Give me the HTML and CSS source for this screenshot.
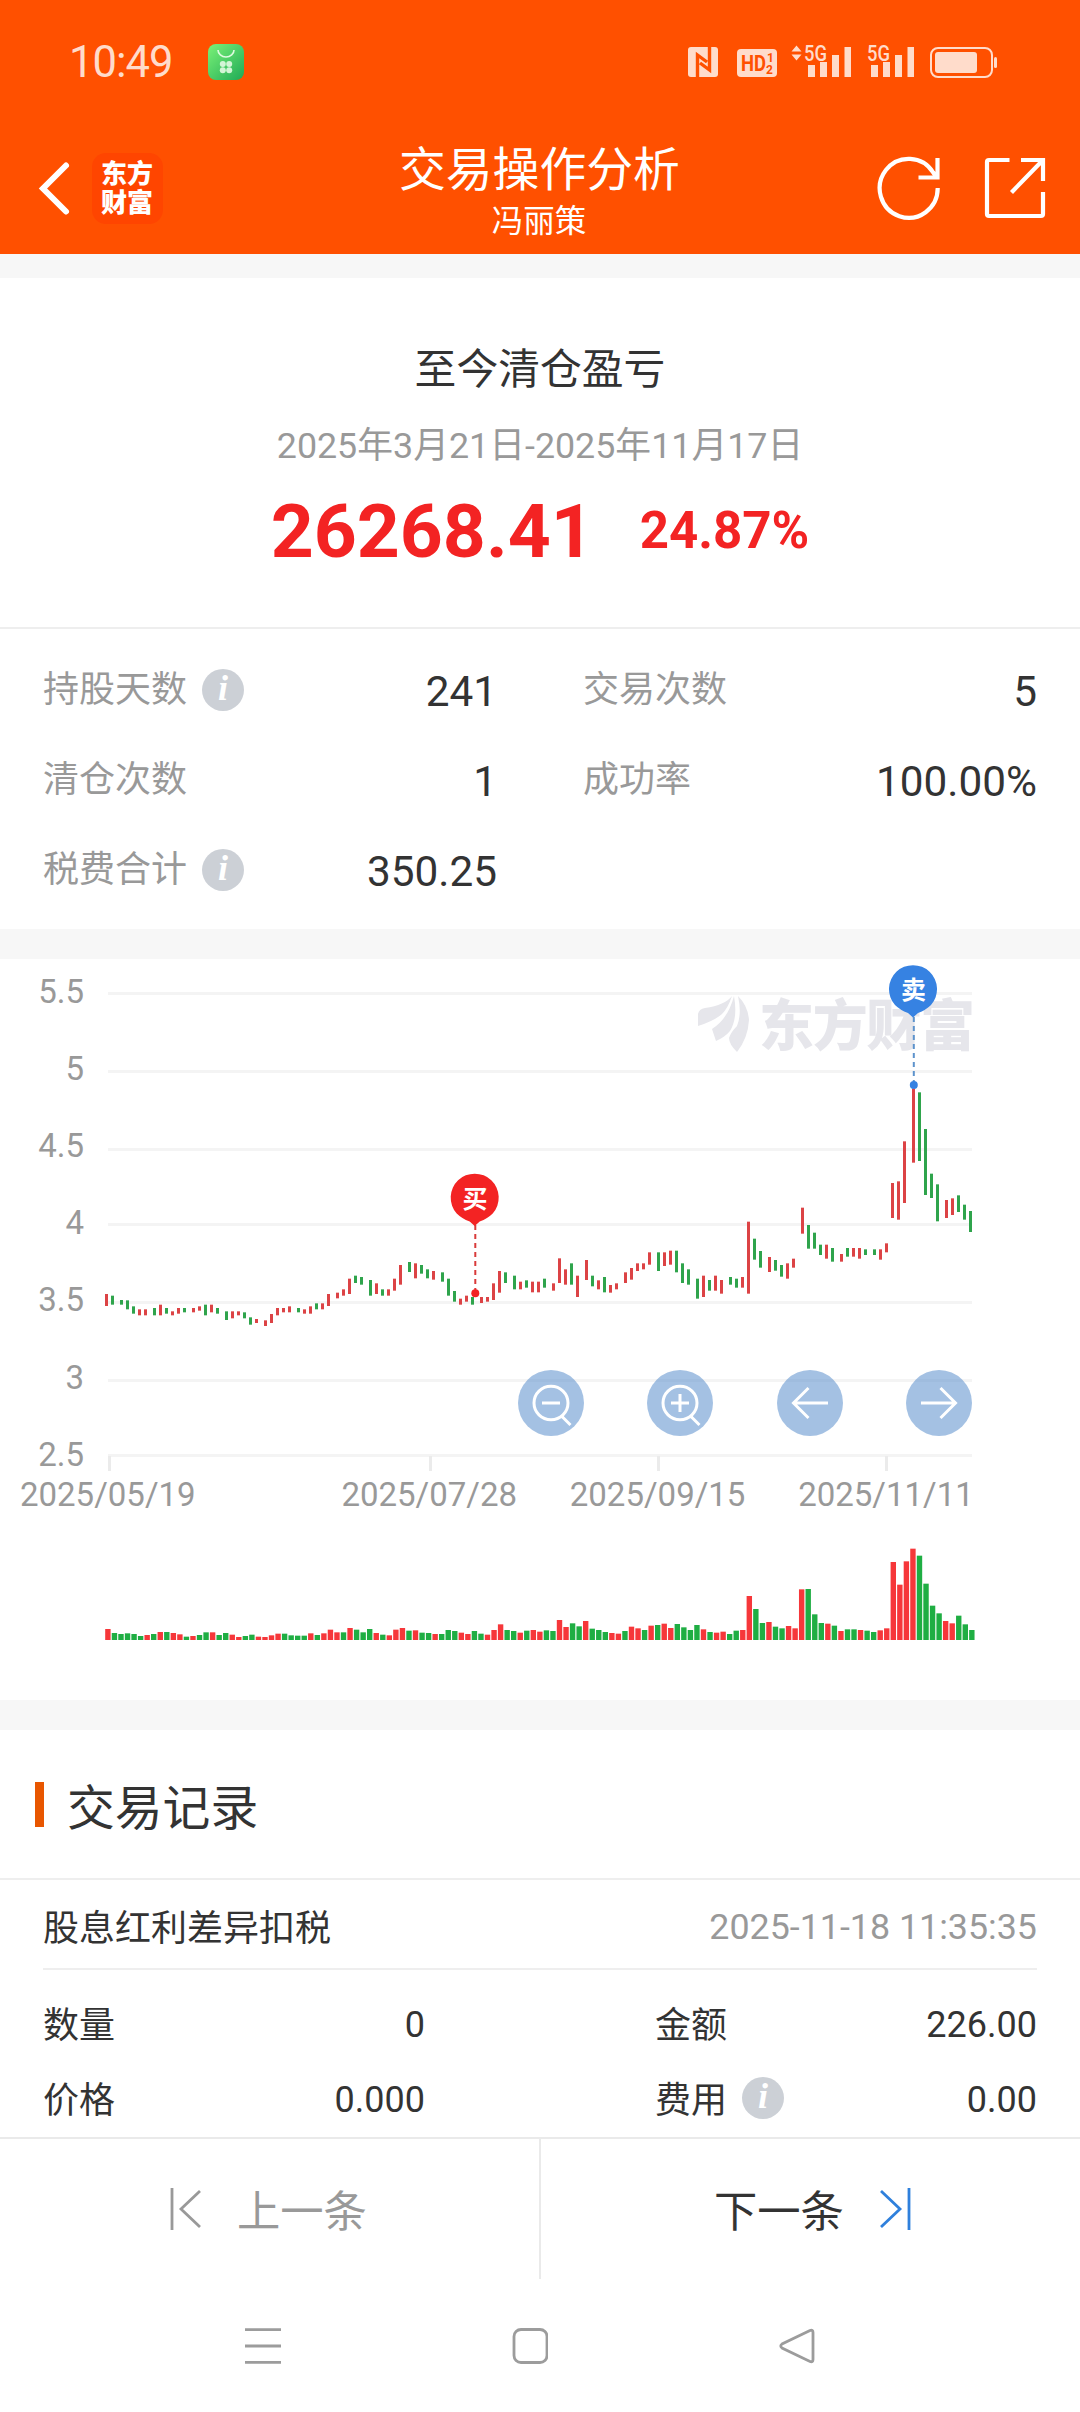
FILE: index.html
```html
<!DOCTYPE html>
<html lang="zh-CN">
<head>
  <meta charset="UTF-8">
  <meta name="viewport" content="width=device-width, initial-scale=1.0">
  <title>交易操作分析</title>
  <link rel="stylesheet" href="styles.css">
</head>
<body>
  <header class="header">
    <div class="status-bar">
      <span class="clock">10:49</span>
      <svg class="app-badge" width="36" height="36" viewBox="0 0 36 36">
        <defs>
          <linearGradient id="badge" x1="0" y1="0" x2="1" y2="1">
            <stop offset="0" stop-color="#7bf277"/>
            <stop offset="1" stop-color="#1faa56"/>
          </linearGradient>
        </defs>
        <rect width="36" height="36" rx="8" fill="url(#badge)"/>
        <path d="M10 6a8 7 0 0 0 16 0" fill="none" stroke="#dffbe0" stroke-width="1.6"/>
        <g fill="#d3f5d6">
          <circle cx="14.8" cy="20" r="3"/><circle cx="21.2" cy="20" r="3"/>
          <circle cx="14.8" cy="26.3" r="3"/><circle cx="21.2" cy="26.3" r="3"/>
        </g>
      </svg>
      <svg class="status-icons" width="312" height="48" viewBox="688 38 312 48">
        <rect x="688" y="47" width="30" height="30" rx="3"/>
        <path class="cut" d="M697.500 78V55l9.500 7M709.500 46v24l-9.500-7"/>
        <rect x="737" y="49" width="40" height="28" rx="4"/>
        <text class="cut-text" x="741" y="71" font-size="22" textLength="25" lengthAdjust="spacingAndGlyphs">HD</text>
        <text class="cut-text" x="767" y="61.500" font-size="12">1</text>
        <text class="cut-text" x="766" y="74" font-size="12">2</text>
        <path d="M791.500 51.500l5-6 5 6zM791.500 54.500l5 6 5-6z"/>
        <text x="804" y="61" font-size="22" font-weight="500" textLength="23" lengthAdjust="spacingAndGlyphs">5G</text>
        <path d="M808 65h7v12h-7zM820 62h7v15h-7zM832 55h7v22h-7zM844.500 47h6.500v30h-6.500z"/>
        <text x="867" y="61" font-size="22" font-weight="500" textLength="23" lengthAdjust="spacingAndGlyphs">5G</text>
        <path d="M871 65h7v12h-7zM883 62h7v15h-7zM895 55h7v22h-7zM907.500 47h6.500v30h-6.500z"/>
        <rect x="931" y="48" width="61" height="29" rx="7" class="battery"/>
        <rect x="935" y="52" width="42" height="21" rx="3"/>
        <rect x="994" y="57" width="3" height="11" rx="1.500"/>
      </svg>
    </div>
    <div class="nav">
      <div class="nav-left">
        <svg width="34" height="56" viewBox="0 0 34 56" class="line-icon back"><path d="M28 5.500L5 28.500 28 51.500"/></svg>
        <div class="logo">东方<br>财富</div>
      </div>
      <div class="nav-title">
        <h1>交易操作分析</h1>
        <p>冯丽策</p>
      </div>
      <svg width="66" height="66" viewBox="876 155 66 66" class="line-icon refresh"><path d="M937.700 188a29 29.500 0 1 1-4.500-15.500l4 5.500M937.500 158v19.500H918.500"/></svg>
      <svg width="66" height="66" viewBox="983 155 66 66" class="line-icon share"><path d="M1009.500 160H989q-2 0-2 2v52q0 2 2 2h52q2 0 2-2v-22M1021 160h22v21M1011.500 192.500L1043 160"/></svg>
    </div>
  </header>

  <main>
    <section class="card summary">
      <h2>至今清仓盈亏</h2>
      <p class="period">2025年3月21日-2025年11月17日</p>
      <p class="profit"><span class="amount">26268.41</span><span class="rate">24.87%</span></p>
    </section>

    <section class="card stats">
      <div class="stat"><span>持股天数</span><i class="info">i</i><b>241</b></div>
      <div class="stat"><span>交易次数</span><b>5</b></div>
      <div class="stat"><span>清仓次数</span><b>1</b></div>
      <div class="stat"><span>成功率</span><b>100.00%</b></div>
      <div class="stat"><span>税费合计</span><i class="info">i</i><b>350.25</b></div>
    </section>

    <section class="card chart-card">
      <svg class="chart" width="1080" height="741" viewBox="0 959 1080 741">
        <g id="grid"></g>
        <g class="watermark">
          <path d="M698 1026V1014q1-5 7-6 20-3 27-12-4 12-10 18-8 7-24 12z"/>
          <path d="M712 1029q16-10 22-33 4 22-4 35-5 6-14 10-2-6-4-12z"/>
          <path d="M738 996q10 10 11 24-1 18-12 32-8-8-8-14 2-6 8-12 5-12 1-30z"/>
          <text x="759" y="1045" textLength="216">东方财富</text>
        </g>
        <g id="candles"></g>
        <g id="volumes"></g>
        <g class="pin buy">
          <path class="dash" d="M475.300 1225v66"/>
          <circle cx="475.300" cy="1293.300" r="4"/>
          <path d="M474.700 1226l-5-4.500q-8-3-13-8a24 24 0 1 1 36 0q-5 5-13 8z"/>
          <text x="475" y="1207.500">买</text>
        </g>
        <g class="pin sell">
          <path class="dash" d="M913.800 1017v66"/>
          <circle cx="913.800" cy="1085" r="4"/>
          <path d="M913 1017.500l-5-4.500q-8-3-13-8a24 24 0 1 1 36 0q-5 5-13 8z"/>
          <text x="913.500" y="999">卖</text>
        </g>
        <g class="tools">
          <circle cx="551" cy="1403" r="33"/>
          <circle cx="680" cy="1403" r="33"/>
          <circle cx="810" cy="1403" r="33"/>
          <circle cx="939" cy="1403" r="33"/>
          <path d="M561.500 1416l9 9M542 1403h18M568 1403a17 16.700 0 1 1-34 0a17 16.700 0 1 1 34 0"/>
          <path d="M690.500 1416l9 9M671 1403h18M680 1394v18M697 1403a17 16.700 0 1 1-34 0a17 16.700 0 1 1 34 0"/>
          <path d="M828 1403h-34M808.500 1388l-15 15 15 15"/>
          <path d="M921 1403h34M940.500 1388l15 15-15 15"/>
        </g>
      </svg>
    </section>

    <section class="card records">
      <h3>交易记录</h3>
      <div class="record">
        <div class="record-head"><span>股息红利差异扣税</span><time>2025-11-18 11:35:35</time></div>
        <div class="record-body">
          <div class="field"><span>数量</span><b>0</b></div>
          <div class="field"><span>金额</span><b>226.00</b></div>
          <div class="field"><span>价格</span><b>0.000</b></div>
          <div class="field"><span>费用</span><i class="info">i</i><b>0.00</b></div>
        </div>
      </div>
    </section>
  </main>

  <footer class="pager">
    <a class="prev">
      <svg width="32" height="44" viewBox="0 0 32 44"><path d="M2 1v42M30 4L11 22l19 18"/></svg>
      <span>上一条</span>
    </a>
    <a class="next">
      <span>下一条</span>
      <svg width="32" height="44" viewBox="0 0 32 44"><path d="M30 1v42M2 4l19 18L2 40"/></svg>
    </a>
  </footer>

  <div class="system-nav">
    <svg width="36" height="36" viewBox="0 0 36 36"><path d="M0 1.700h36M0 18h36M0 34.300h36"/></svg>
    <svg width="36" height="36" viewBox="0 0 36 36"><rect x="2" y="1.500" width="33" height="33" rx="7"/></svg>
    <svg width="36" height="36" viewBox="0 0 36 36"><path d="M31 2.500L3 16q-2.500 2 0 4l28 13.500q3 1 3-2v-27q0-3-3-2z"/></svg>
  </div>

  <script src="chart.js"></script>
</body>
</html>
```

FILE: styles.css
```css
* {
  box-sizing: border-box;
  margin: 0;
  padding: 0;
}

body {
  width: 1080px;
  height: 2412px;
  display: flex;
  flex-direction: column;
  overflow: hidden;
  background-color: #f7f7f7;
  color: #333;
  font-family: Roboto, "Noto Sans CJK SC", sans-serif;
  font-size: 36px;
}

h1, h2, h3, b {
  font-weight: 400;
}

/* header */
.header {
  height: 254px;
  background-color: #ff5000;
  color: #fff;
  flex: none;
}

.status-bar {
  height: 124px;
  display: flex;
  align-items: center;
  padding: 0 80px 0 69px;
}

.clock {
  width: 139px;
  padding-top: 1px;
  font-size: 43.500px;
  letter-spacing: -1px;
  color: #ffdccb;
}

.status-icons {
  margin-left: auto;
  fill: #ffdccb;
}

.cut {
  fill: none;
  stroke: #ff5000;
  stroke-width: 3.4;
}

.cut-text {
  fill: #ff5000;
  font-weight: 700;
}

.battery {
  fill: none;
  stroke: #ffdccb;
  stroke-width: 2;
}

.nav {
  height: 130px;
  display: flex;
  align-items: center;
  padding: 0 31px 2px 38px;
}

.nav-left {
  width: 361px;
  display: flex;
  align-items: center;
  gap: 20px;
}

.logo {
  width: 71px;
  height: 71px;
  padding: 7px 1px 0 0;
  border-radius: 14px;
  background-color: #ff4500;
  font-size: 26px;
  font-weight: 900;
  line-height: 29px;
  text-align: center;
}

.line-icon {
  fill: none;
  stroke: #fff;
  stroke-width: 4.2;
}

.back {
  stroke-width: 6;
  stroke-linecap: round;
}

.nav-title {
  width: 280px;
  padding-top: 10px;
  text-align: center;
  white-space: nowrap;
}

.nav-title h1 {
  font-size: 46.800px;
  line-height: 56px;
}

.nav-title p {
  font-size: 31.500px;
  line-height: 47px;
}

.refresh {
  margin-left: auto;
  margin-right: 41px;
}

/* cards */
main {
  height: 1883px;
  overflow: hidden;
  padding-top: 24px;
  flex: none;
}

.card {
  background-color: #fff;
}

.summary {
  height: 351px;
  padding-top: 61px;
  border-bottom: 2px solid #eee;
  text-align: center;
}

.summary h2 {
  font-size: 41.800px;
  line-height: 62px;
}

.period {
  margin-top: 19px;
  color: #999;
  font-size: 35.800px;
  line-height: 52px;
}

.profit {
  display: flex;
  justify-content: center;
  align-items: center;
  gap: 46px;
  margin-top: 14px;
  color: #f32323;
  font-weight: 700;
  line-height: 90px;
}

.amount {
  font-size: 75px;
}

.rate {
  font-size: 51px;
}

.stats {
  height: 300px;
  padding: 16px 43px 0;
  display: grid;
  grid-template-columns: 454px 454px;
  grid-auto-rows: 90px;
  column-gap: 86px;
}

.stat, .field {
  display: flex;
  align-items: center;
}

.stat span {
  padding-bottom: 8px;
  color: #999;
}

.stat b {
  margin-left: auto;
  padding-top: 2px;
  font-size: 42.300px;
}

.field span {
  padding-bottom: 5px;
}

.field b {
  margin-left: auto;
}

.info {
  width: 42px;
  height: 42px;
  margin-left: 15px;
  border-radius: 50%;
  background-color: #ccd0d6;
  color: #fff;
  font: italic 700 36px/39px "Liberation Serif", serif;
  text-align: center;
}

.field .info {
  margin-bottom: 3px;
}

/* chart */
.chart-card {
  margin: 30px 0;
  height: 741px;
}

.chart {
  display: block;
}

.grid-line {
  stroke: #f4f4f4;
  stroke-width: 3;
}

.tick {
  stroke: #ebebeb;
  stroke-width: 3;
}

.axis-label {
  fill: #999;
  font-size: 33px;
}

.watermark {
  fill: #e6e6eb;
  font-size: 55px;
  font-weight: 900;
}

.candle-up { fill: #dc4345; }
.candle-down { fill: #2fa44c; }
.volume-up { fill: #f6373a; }
.volume-down { fill: #1fae43; }

.buy { fill: #f32323; stroke: #d93a3a; }
.sell { fill: #3682e2; stroke: #5d93cc; }

.pin path, .pin circle, .pin text {
  stroke: none;
}

.pin .dash {
  stroke: inherit;
  stroke-width: 2;
  stroke-dasharray: 5 4;
}

.pin text {
  fill: #fff;
  font-size: 25px;
  font-weight: 700;
  text-anchor: middle;
}

.tools circle {
  fill: rgba(73, 131, 199, 0.5);
}

.tools path {
  fill: none;
  stroke: #fff;
  stroke-width: 3;
}

/* records */
.records h3 {
  height: 150px;
  display: flex;
  align-items: center;
  padding-left: 35px;
  border-bottom: 2px solid #eee;
  font-size: 47.800px;
}

.records h3::before {
  content: "";
  width: 9px;
  height: 45px;
  margin-right: 23px;
  background-color: #e85600;
}

.record {
  padding: 0 43px;
}

.record-head {
  height: 90px;
  padding-top: 2px;
  display: flex;
  align-items: center;
  justify-content: space-between;
  border-bottom: 2px solid #eee;
}

.record-head time {
  padding-top: 3px;
  color: #999;
  font-size: 35.800px;
}

.record-body {
  display: grid;
  grid-template-columns: 382px 382px;
  grid-auto-rows: 75px;
  justify-content: space-between;
  padding-top: 17px;
  height: 190px;
}

/* bottom bars */
.pager {
  height: 142px;
  display: flex;
  flex: none;
  border-top: 2px solid #eaeaea;
  background-color: #fff;
  font-size: 43.300px;
}

.pager a {
  display: flex;
  align-items: center;
}

.pager span {
  padding-bottom: 3px;
}

.pager svg {
  fill: none;
  stroke: currentColor;
  stroke-width: 2.8;
}

.prev {
  width: 541px;
  padding-left: 170px;
  gap: 35px;
  color: #999;
  border-right: 2px solid #eaeaea;
}

.next {
  flex: 1;
  padding-left: 173px;
  gap: 35px;
}

.next svg {
  color: #2f80dc;
}

.system-nav {
  flex: 1;
  display: flex;
  padding: 49px 265px 0 245px;
  justify-content: space-between;
  background-color: #fff;
}

.system-nav svg {
  fill: none;
  stroke: #9c9c9c;
  stroke-width: 2.8;
}
```

FILE: chart.js
```js
// one entry per trading day: r = up, g = down; high and low in thirds of a pixel
const candles = `r432,468 g437,464 g450,464 g451,478 g469,491 r478,496 r478,496 g474,496 r464,496 g474,491
r484,496 r474,491 g474,487 r474,487 r469,482 g464,496 r464,487 g474,491 g484,510 r484,505
r484,496 g487,505 g502,524 r507,519 r511,528 r492,519 r474,496 r474,487 r469,487 g474,487
r478,491 r469,491 g460,478 r460,478 r432,468 r428,445 r418,437 r386,432 g377,399 g381,404
g390,437 r400,432 g418,437 r418,437 r386,422 r345,404 g336,366 r340,385 g345,371 g358,385
r363,389 g367,395 g386,437 g423,455 r446,464 r437,455 g441,464 r441,459 r441,455 r400,450
r363,428 g367,399 g377,418 r395,418 g391,413 r395,427 r395,427 g386,413 r400,422 r325,399
r358,404 g340,404 r377,441 r330,390 g377,409 r391,418 g381,427 r405,428 r400,418 r367,399
r354,389 r340,363 r340,358 r307,344 g307,363 r307,348 r302,344 g302,367 g340,399 g358,404
g386,446 r377,441 g390,422 r377,422 r390,431 g381,404 g386,413 r381,413 r215,431 g266,329
g303,353 r321,366 g330,362 g345,380 r340,386 r326,353 r173,251 g225,296 g248,296 g284,315
r284,326 g294,335 r312,335 g294,320 r294,320 r294,326 g298,315 g298,315 r298,329 r280,307
r99,204 r94,209 r-26,159 r-185,38 g-173,33 g-63,135 g71,144 g103,214 r150,204 r145,195
g136,186 g164,209 g183,246`.split(/\s+/);

const volumes = `r33 g21 g18 g20 g18 g12 r15 g18 r24 g24 r21 r17 g10 r12 g15 g23 r23 g15 g21 r16
r9 g12 g16 r10 r9 r14 r19 g19 g14 g13 g13 r20 g15 r20 r31 r23 g23 r36 g31 g23
g33 r21 g16 r14 r31 r36 g28 r29 g22 g21 r18 g18 g30 g27 r22 r18 g27 g19 r16 r30
r47 g30 g27 r22 g28 r30 r25 g29 g27 r60 r39 g50 g41 r57 g34 g30 g24 r21 r19 g27
r40 r35 g30 r43 g45 r49 r36 g48 g38 g30 g45 r32 g24 r22 r25 g18 g28 r30 r132 g93
g51 r54 g40 g35 r42 r35 r152 g153 g77 g51 r49 g43 r27 g32 g32 r30 g28 g24 r29 r35
r234 r166 r236 r274 g253 g169 g103 g80 r57 r50 g73 g47 g30`.split(/\s+/);

const NS = 'http://www.w3.org/2000/svg';

function draw(parent, tag, attrs, text) {
  const el = document.createElementNS(NS, tag);
  for (const key in attrs) el.setAttribute(key, attrs[key]);
  if (text) el.textContent = text;
  document.getElementById(parent).appendChild(el);
}

// axes
const gridY = [993.5, 1071.5, 1149.5, 1224.5, 1302.5, 1380.5, 1455.5];
['5.5', '5', '4.5', '4', '3.5', '3', '2.5'].forEach(function (label, i) {
  draw('grid', 'line', { class: 'grid-line', x1: 108, x2: 972, y1: gridY[i], y2: gridY[i] });
  draw('grid', 'text', { class: 'axis-label', x: 84, y: 1002.5 + i * 77.2, 'text-anchor': 'end' }, label);
});

[[109.5, '2025/05/19'], [430.5, '2025/07/28'], [658.5, '2025/09/15'], [886.5, '2025/11/11']].forEach(function (tick, i) {
  draw('grid', 'line', { class: 'tick', x1: tick[0], x2: tick[0], y1: 1456, y2: 1471 });
  draw('grid', 'text', { class: 'axis-label', x: tick[0] - 1.7 + i * 0.4, y: 1505.5, 'text-anchor': 'middle' }, tick[1]);
});

candles.forEach(function (item, i) {
  const range = item.slice(1).split(',').map(Number);
  draw('candles', 'rect', {
    class: item[0] === 'r' ? 'candle-up' : 'candle-down',
    x: 105 + 3 * Math.round(i * 24 / 11 + 0.27),
    y: 1150 + range[0] / 3,
    width: 3,
    height: (range[1] - range[0]) / 3
  });
});

volumes.forEach(function (item, i) {
  const height = Number(item.slice(1)) / 3;
  draw('volumes', 'rect', {
    class: item[0] === 'r' ? 'volume-up' : 'volume-down',
    x: 105.2 + i * 6.545,
    y: 1640 - height,
    width: 5.4,
    height: height
  });
});
```
